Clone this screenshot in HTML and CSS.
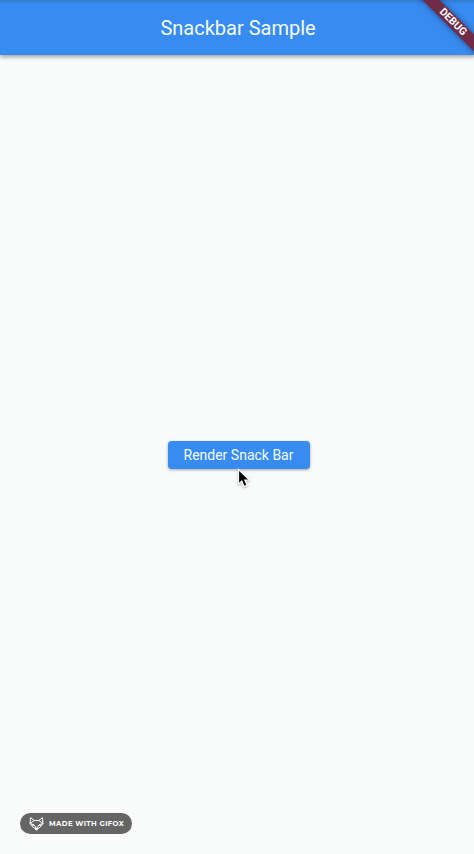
FILE: index.html
```html
<!DOCTYPE html>
<html lang="en">
<head>
<meta charset="utf-8">
<title>Snackbar Sample</title>
<link rel="stylesheet" href="styles.css">
</head>
<body>
<div class="app">
  <header class="app-bar"><h1 class="title">Snackbar Sample</h1></header>
  <main class="content">
    <button class="action">Render Snack Bar</button>
  </main>
  <div class="debug">DEBUG</div>
  <div class="badge">
    <svg class="fox" viewBox="0 0 16 16" fill="none" stroke="#fff" stroke-width="1" stroke-linejoin="round">
      <path d="M2.600 1.600 6.200 4.500h4.600l3.600-2.900.6 5.900-2 2.700-4.500 3.900-4.500-3.900-2-2.700z"/>
      <path d="M2 7.500l4.200-3M15 7.500l-4.200-3M2 7.500l4 1.300 2.500 3.700 2.500-3.700 4-1.300M4 10.200l2-1.400M13 10.200l-2-1.400"/>
      <path d="M7 12.200h3l-1.500 1.800z" fill="#fff"/>
    </svg>
    <span>MADE WITH GIFOX</span>
  </div>
  <svg class="cursor" viewBox="0 0 14 21">
    <path d="M1.500 1.500v14.700l3.300-3.100 2.300 5.400 3-1.300-2.300-5.200h4.700z" fill="#000" stroke="#fff" stroke-width="1.200"/>
  </svg>
</div>
</body>
</html>
```
FILE: styles.css
```css
* { box-sizing: border-box; }
body { margin: 0; font-family: Roboto, sans-serif; }
.app {
  position: relative;
  display: flex;
  flex-direction: column;
  height: 854px;
  overflow: hidden;
  background: #f9fafa;
}
.app-bar {
  display: flex;
  align-items: center;
  justify-content: center;
  height: 55px;
  padding-left: 2px;
  background: linear-gradient(#3279cf 0, #388bf0 4px);
  box-shadow: 0 2px 4px rgba(0, 0, 0, .36);
}
.title {
  margin: 0;
  color: #f3fcff;
  font-size: 20px;
  font-weight: 400;
  line-height: 24px;
}
.content {
  flex: 1;
  display: flex;
  align-items: center;
  justify-content: center;
  padding: 1px 0 0 3px;
}
.action {
  width: 142px;
  height: 28px;
  padding: 0;
  border: 0;
  border-radius: 4px;
  background: #388bf0;
  box-shadow: 0 1px 3px rgba(0, 0, 0, .35);
  color: #f3fcff;
  font: 400 14px/28px Roboto, sans-serif;
}
.debug {
  position: absolute;
  left: 393px;
  top: 16px;
  width: 120px;
  height: 12px;
  background: #702b45;
  box-shadow: 0 0 6px rgba(0, 0, 0, .45);
  color: #fff;
  font-size: 10.5px;
  font-weight: 700;
  line-height: 12px;
  text-align: center;
  transform: rotate(45deg);
}
.badge {
  position: absolute;
  left: 20px;
  top: 813px;
  display: flex;
  align-items: center;
  gap: 5px;
  width: 112px;
  height: 21px;
  padding-left: 8px;
  border-radius: 11px;
  background: #656565;
  color: #fff;
  font: 700 7px/21px Montserrat, "Open Sans", sans-serif;
  letter-spacing: .36px;
  white-space: nowrap;
}
.fox { width: 16px; height: 16px; }
.cursor {
  position: absolute;
  left: 237px;
  top: 468px;
  width: 14px;
  height: 21px;
  filter: drop-shadow(0 1px 1px rgba(0, 0, 0, .3));
}
```
